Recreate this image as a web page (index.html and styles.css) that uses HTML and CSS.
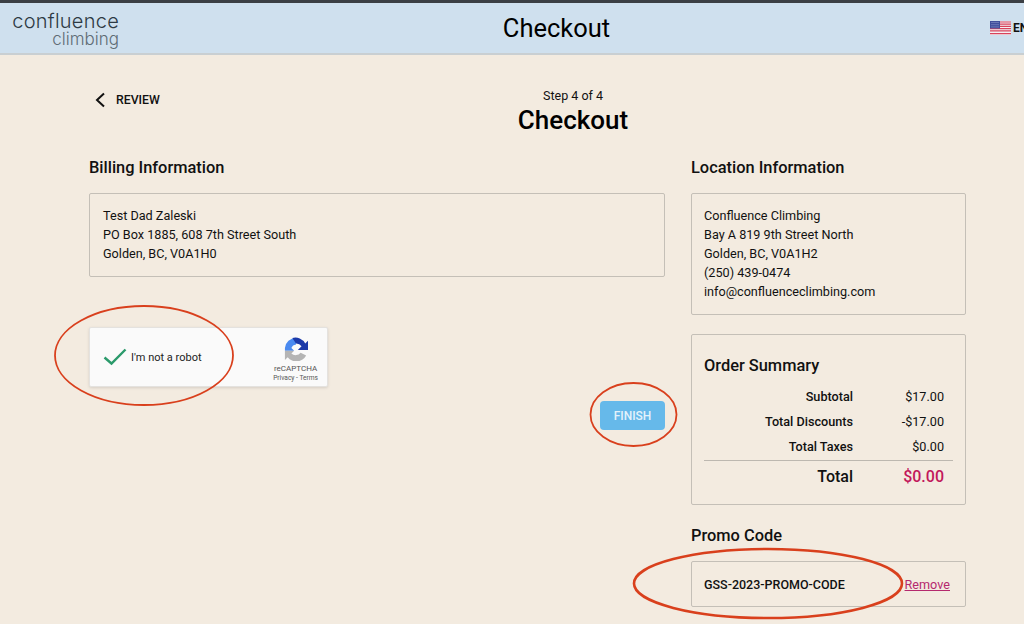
FILE: index.html
```html
<!DOCTYPE html>
<html lang="en">

<head>
    <meta charset="UTF-8">
    <meta name="viewport" content="width=device-width, initial-scale=1.0">
    <title>Checkout</title>
    <link rel="stylesheet" href="styles.css">
</head>

<body>
    <header class="top-bar">
        <div class="logo">
            <span class="logo-main">confluence</span>
            <span class="logo-sub">climbing</span>
        </div>
        <h1 class="top-title">Checkout</h1>
        <div class="lang">
            <svg class="flag" width="21" height="14" viewBox="0 0 21 14">
                <rect width="21" height="14" fill="#f4f0f2" />
                <path d="M0 1h21M0 3.2h21M0 5.4h21M0 7.6h21M0 9.8h21M0 12.6h21" stroke="#d8435c" stroke-width="1.2" />
                <rect width="10" height="7.5" fill="#3f4f9c" />
                <path d="M1.5 1.5h7M1.5 3.7h7M1.5 5.9h7" stroke="#aab3dc" stroke-width=".8" stroke-dasharray="1 1" />
            </svg>
            <span>EN</span>
        </div>
    </header>

    <main class="page">
        <div class="step-head">
            <a class="back" href="#">
                <svg width="12" height="16" viewBox="0 0 12 16">
                    <path d="M10 1.5 3 8l7 6.5" fill="none" stroke="#111" stroke-width="2" />
                </svg>
                <span>REVIEW</span>
            </a>
            <div class="step-title">
                <div class="step-count">Step 4 of 4</div>
                <h2>Checkout</h2>
            </div>
        </div>

        <div class="columns">
            <section class="col-left">
                <h3>Billing Information</h3>
                <div class="box billing">
                    Test Dad Zaleski<br>
                    PO Box 1885, 608 7th Street South<br>
                    Golden, BC, V0A1H0
                </div>

                <div class="captcha">
                    <svg class="check" width="24" height="18" viewBox="0 0 24 18">
                        <path d="M1.5 9.5 8.5 15.5 22.5 1.5" fill="none" stroke="#2b9a6b" stroke-width="2.4" />
                    </svg>
                    <span class="captcha-label">I'm not a robot</span>
                    <div class="captcha-brand">
                        <svg width="24" height="24" viewBox="0 0 26 26">
                            <path d="M1 12 A12 12 0 0 1 13 1 L13 8 A6 6 0 0 0 8 12 L11 15 H1Z" fill="#4a8af0" />
                            <path d="M9 1 A12 12 0 0 1 23 7 L26 4 V14 H15 L19 10 A7 7 0 0 0 13 7Z" fill="#1c3aa9" />
                            <path d="M1 15 H11 L8 18 A7 7 0 0 0 18 17 L24 20 A12 12 0 0 1 4 22 L1 25Z" fill="#b4b4b4" />
                        </svg>
                        <div class="captcha-name">reCAPTCHA</div>
                        <div class="captcha-links">Privacy - Terms</div>
                    </div>
                </div>

                <div class="finish-row">
                    <button class="finish">FINISH</button>
                </div>
            </section>

            <aside class="col-right">
                <h3>Location Information</h3>
                <div class="box location">
                    Confluence Climbing<br>
                    Bay A 819 9th Street North<br>
                    Golden, BC, V0A1H2<br>
                    (250) 439-0474<br>
                    info@confluenceclimbing.com
                </div>

                <div class="box summary">
                    <h3>Order Summary</h3>
                    <div class="sum-row"><span>Subtotal</span><span class="amount">$17.00</span></div>
                    <div class="sum-row"><span>Total Discounts</span><span class="amount">-$17.00</span></div>
                    <div class="sum-row"><span>Total Taxes</span><span class="amount">$0.00</span></div>
                    <div class="sum-row sum-total"><span>Total</span><span class="amount">$0.00</span></div>
                </div>

                <h3 class="promo-title">Promo Code</h3>
                <div class="box promo">
                    <span class="promo-code">GSS-2023-PROMO-CODE</span>
                    <a class="remove" href="#">Remove</a>
                </div>
            </aside>
        </div>
    </main>

    <!-- red pen marks drawn over the screenshot -->
    <svg class="marks" width="1024" height="624" viewBox="0 0 1024 624">
        <defs>
            <filter id="rough" x="-5%" y="-5%" width="110%" height="110%">
                <feTurbulence type="fractalNoise" baseFrequency=".3" numOctaves="1" seed="4" />
                <feDisplacementMap in="SourceGraphic" scale="1.6" />
            </filter>
        </defs>
        <g fill="none" stroke="#d9401f" filter="url(#rough)">
            <ellipse cx="144" cy="355.5" rx="89" ry="49.5" stroke-width="1.8" />
            <ellipse cx="633.5" cy="414.5" rx="43" ry="31.5" stroke-width="1.8" />
            <ellipse cx="768" cy="583.5" rx="134" ry="34.5" stroke-width="2.6" />
        </g>
    </svg>
</body>

</html>
```

FILE: styles.css
```css
html {
    box-sizing: border-box;
    font-family: "Roboto", sans-serif;
    font-size: 12.65px;
}

*,
*:before,
*:after {
    box-sizing: inherit;
}

body {
    margin: 0;
    height: 624px;
    overflow: hidden;
    position: relative;
    background-color: #f3ebe0;
    color: #111;
}

h1,
h2,
h3 {
    margin: 0;
}

/******* Header ********/
.top-bar {
    display: grid;
    grid-template-columns: 1fr auto 1fr;
    align-items: center;
    height: 55px;
    border-top: 3px solid #3b3f44;
    border-bottom: 2px solid #c9cfd2;
    background-color: #cfe0ee;
    padding-left: 12px;
    overflow: hidden;
}

.logo {
    display: flex;
    flex-direction: column;
    align-items: flex-end;
    width: 107px;
    font-family: "Inter", sans-serif;
    font-weight: 300;
}

.logo-main {
    font-size: 20px;
    line-height: 24px;
    letter-spacing: .25px;
    color: #2e3a44;
}

.logo-sub {
    font-size: 17px;
    line-height: 18px;
    margin-top: -3px;
    color: #5f6c75;
}

.top-title {
    font-size: 25.5px;
    font-weight: 400;
    color: #000;
    margin-left: 77px;
}

.lang {
    display: flex;
    align-items: center;
    gap: 2px;
    justify-self: end;
    width: 34px;
    font-size: 12px;
    font-weight: 700;
    white-space: nowrap;
}

.flag {
    flex: none;
}

/******* Page ********/
.page {
    padding: 30px 58px 0 89px;
}

.step-head {
    display: grid;
    grid-template-columns: 368px 232px;
    align-items: start;
    height: 72px;
}

.back {
    display: flex;
    align-items: center;
    gap: 10px;
    margin-top: 7px;
    padding-left: 5px;
    font-size: 12.3px;
    font-weight: 500;
    color: #111;
    text-decoration: none;
}

.step-title {
    margin-top: 4px;
    text-align: center;
}

.step-count {
    font-size: 12.5px;
    line-height: 14px;
}

.step-title h2 {
    font-size: 26px;
    line-height: 35px;
    font-weight: 500;
    color: #000;
}

.columns {
    display: grid;
    grid-template-columns: 576px 275px;
    gap: 26px;
}

h3 {
    font-size: 16.4px;
    line-height: 22px;
    font-weight: 500;
}

.box {
    border: 1px solid #c4bfb7;
    border-radius: 2px;
    margin-top: 14px;
    padding: 12px;
    line-height: 19px;
}

.billing {
    height: 84px;
    padding-left: 13px;
}

/******* Captcha ********/
.captcha {
    display: flex;
    align-items: center;
    width: 239px;
    height: 60px;
    margin-top: 50px;
    padding: 0 9px 0 13px;
    border: 1px solid #e4e2df;
    border-radius: 2px;
    background-color: #fafafa;
    box-shadow: 0 1px 3px rgba(0, 0, 0, .12);
}

.captcha-label {
    margin-left: 4px;
    font-size: 11px;
    color: #222;
}

.captcha-brand {
    margin-left: auto;
    padding-top: 5px;
    text-align: center;
    color: #555;
}

.captcha-name {
    font-size: 8px;
    line-height: 10px;
}

.captcha-links {
    font-size: 6.6px;
    line-height: 9px;
}

.finish-row {
    display: flex;
    justify-content: flex-end;
    margin-top: 14px;
}

.finish {
    width: 65px;
    height: 29px;
    border: none;
    border-radius: 4px;
    background-color: #66b9ea;
    color: #e3f2fb;
    font-family: "Roboto", sans-serif;
    font-size: 12px;
    font-weight: 500;
}

/******* Order summary ********/
.location {
    height: 122px;
}

.summary {
    height: 171px;
    margin-top: 19px;
    padding: 20px 12px 0;
}

.summary h3 {
    margin-bottom: 7px;
}

.sum-row {
    display: flex;
    justify-content: flex-end;
    height: 25.2px;
    align-items: center;
    font-weight: 500;
}

.amount {
    width: 100px;
    padding-right: 9px;
    text-align: right;
    font-weight: 400;
}

.sum-total {
    height: 32px;
    border-top: 1px solid #bdb8b0;
    font-size: 16px;
}

.sum-total .amount {
    color: #c2185b;
    font-weight: 500;
}

.promo-title {
    margin-top: 20px;
}

.promo {
    display: flex;
    align-items: center;
    justify-content: space-between;
    height: 46px;
    margin-top: 14px;
    padding: 0 15px 0 12px;
}

.promo-code {
    font-size: 12.5px;
    font-weight: 500;
}

.remove {
    color: #b5296e;
}

/* lies over everything, like the pen marks on the original picture */
.marks {
    position: absolute;
    top: 0;
    left: 0;
    pointer-events: none;
}
```
